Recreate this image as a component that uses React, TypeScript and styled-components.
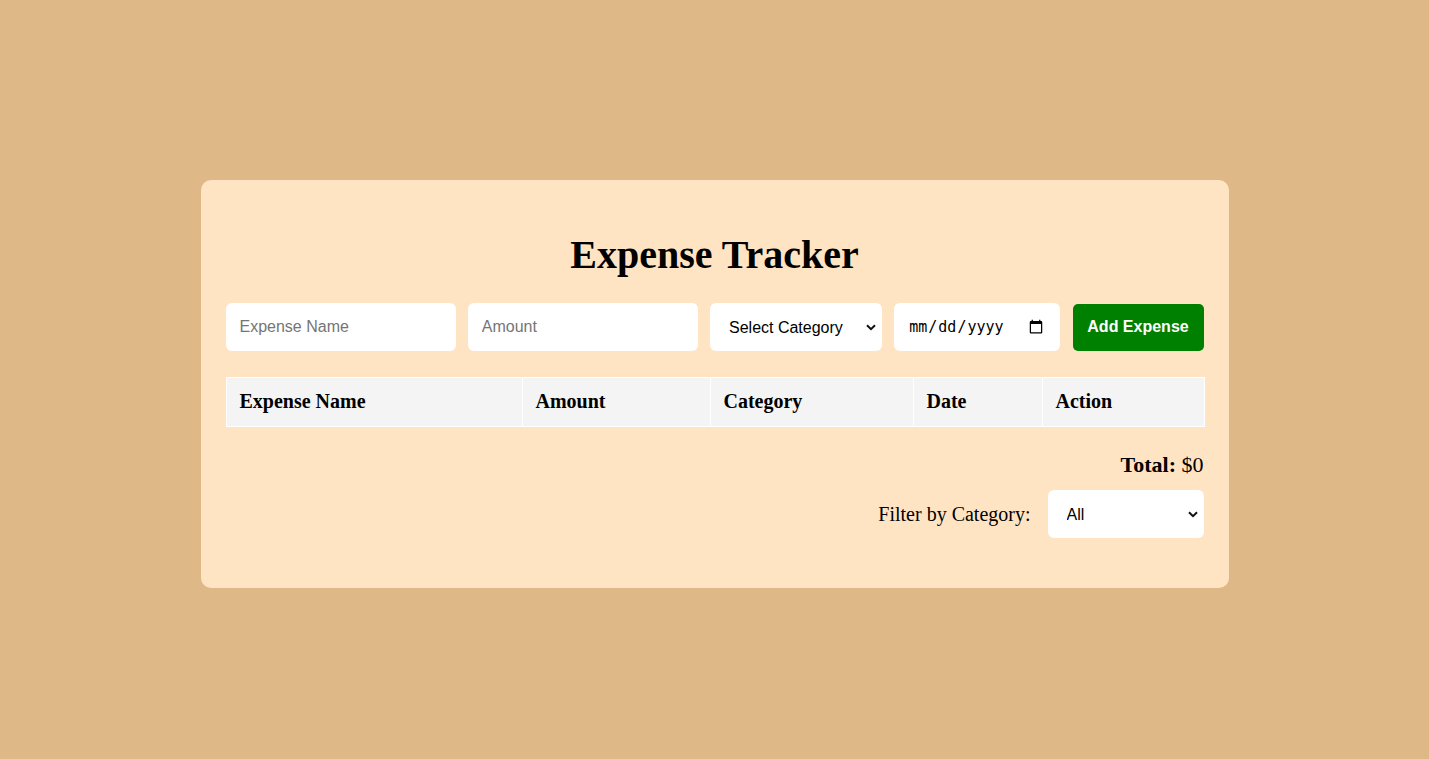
import React from "react";
import styled, { createGlobalStyle } from "styled-components";

const Global = createGlobalStyle`
  html, body { margin: 0; padding: 0; }
  body {
    background: #deb887;
    font-family: "Liberation Serif", "Times New Roman", serif;
    color: #000;
  }
`;

const chevron =
  "data:image/svg+xml;utf8," +
  encodeURIComponent(
    '<svg xmlns="http://www.w3.org/2000/svg" width="10" height="7" viewBox="0 0 10 7"><path d="M1 1.2 L5 5.2 L9 1.2" fill="none" stroke="#111" stroke-width="2"/></svg>'
  );

const Page = styled.div`
  min-height: 100vh;
  box-sizing: border-box;
  padding-top: 180px;
  display: flex;
  justify-content: center;
  align-items: flex-start;
`;

const Card = styled.div`
  width: 1028px;
  box-sizing: border-box;
  background: #ffe4c4;
  border-radius: 10px;
  padding: 25px;
`;

const Title = styled.h1`
  font-size: 40px;
  font-weight: bold;
  text-align: center;
  margin: 26px 0 25px;
`;

const Form = styled.div`
  display: flex;
  justify-content: space-between;
  align-items: center;
  margin-bottom: 26px;
`;

const TextInput = styled.input<{ $w: number }>`
  width: ${(p) => p.$w}px;
  height: 48px;
  box-sizing: border-box;
  border: none;
  border-radius: 6px;
  background: #fff;
  padding: 0 14px;
  font-family: "Liberation Sans", Arial, sans-serif;
  font-size: 16px;
  color: #000;
  outline: none;
  &::placeholder { color: #757575; }
`;

const DateInput = styled.input`
  width: 166px;
  height: 48px;
  box-sizing: border-box;
  border: none;
  border-radius: 6px;
  background: #fff;
  padding: 0 14px 0 14px;
  font-family: "DejaVu Sans Mono", monospace;
  font-size: 15px;
  color: #000;
  outline: none;
  &::-webkit-calendar-picker-indicator {
    width: 16px;
    height: 16px;
    margin-left: 4px;
  }
`;

const Select = styled.select<{ $w: number }>`
  width: ${(p) => p.$w}px;
  height: 48px;
  box-sizing: border-box;
  border: none;
  border-radius: 6px;
  appearance: none;
  -webkit-appearance: none;
  background: #fff url("${chevron}") no-repeat right 6px center / 10px 7px;
  padding: 0 20px 0 19px;
  font-family: "Liberation Sans", Arial, sans-serif;
  font-size: 16px;
  color: #000;
  outline: none;
`;

const AddButton = styled.button`
  width: 131px;
  height: 47px;
  border: none;
  border-radius: 5px;
  background: #008000;
  color: #fff;
  font-family: "Liberation Sans", Arial, sans-serif;
  font-weight: bold;
  font-size: 16px;
  cursor: pointer;
`;

const Table = styled.table`
  width: 100%;
  border-collapse: collapse;
  table-layout: fixed;
`;

const Th = styled.th<{ $w: number }>`
  width: ${(p) => p.$w}px;
  box-sizing: border-box;
  background: #f4f4f4;
  border: 1px solid #fff;
  padding: 12px 13px 13px;
  text-align: left;
  font-size: 20px;
  font-weight: bold;
`;

const Total = styled.p`
  text-align: right;
  font-size: 22px;
  margin: 25px 0 12px;
`;

const FilterRow = styled.div`
  display: flex;
  justify-content: flex-end;
  align-items: center;
  gap: 17px;
  margin-bottom: 25px;
`;

const FilterLabel = styled.label`
  font-size: 20px;
`;

export default function App() {
  return (
    <>
      <Global />
      <Page>
        <Card>
          <Title>Expense Tracker</Title>
          <Form>
            <TextInput $w={230} type="text" placeholder="Expense Name" />
            <TextInput $w={230} type="number" placeholder="Amount" />
            <Select $w={172} defaultValue="">
              <option value="">Select Category</option>
              <option value="Food">Food</option>
              <option value="Transport">Transport</option>
              <option value="Entertainment">Entertainment</option>
            </Select>
            <DateInput type="date" />
            <AddButton>Add Expense</AddButton>
          </Form>
          <Table>
            <thead>
              <tr>
                <Th $w={296}>Expense Name</Th>
                <Th $w={188}>Amount</Th>
                <Th $w={203}>Category</Th>
                <Th $w={129}>Date</Th>
                <Th $w={162}>Action</Th>
              </tr>
            </thead>
            <tbody></tbody>
          </Table>
          <Total>
            <strong>Total:</strong> $0
          </Total>
          <FilterRow>
            <FilterLabel>Filter by Category:</FilterLabel>
            <Select $w={156} defaultValue="All">
              <option value="All">All</option>
              <option value="Food">Food</option>
              <option value="Transport">Transport</option>
              <option value="Entertainment">Entertainment</option>
            </Select>
          </FilterRow>
        </Card>
      </Page>
    </>
  );
}
